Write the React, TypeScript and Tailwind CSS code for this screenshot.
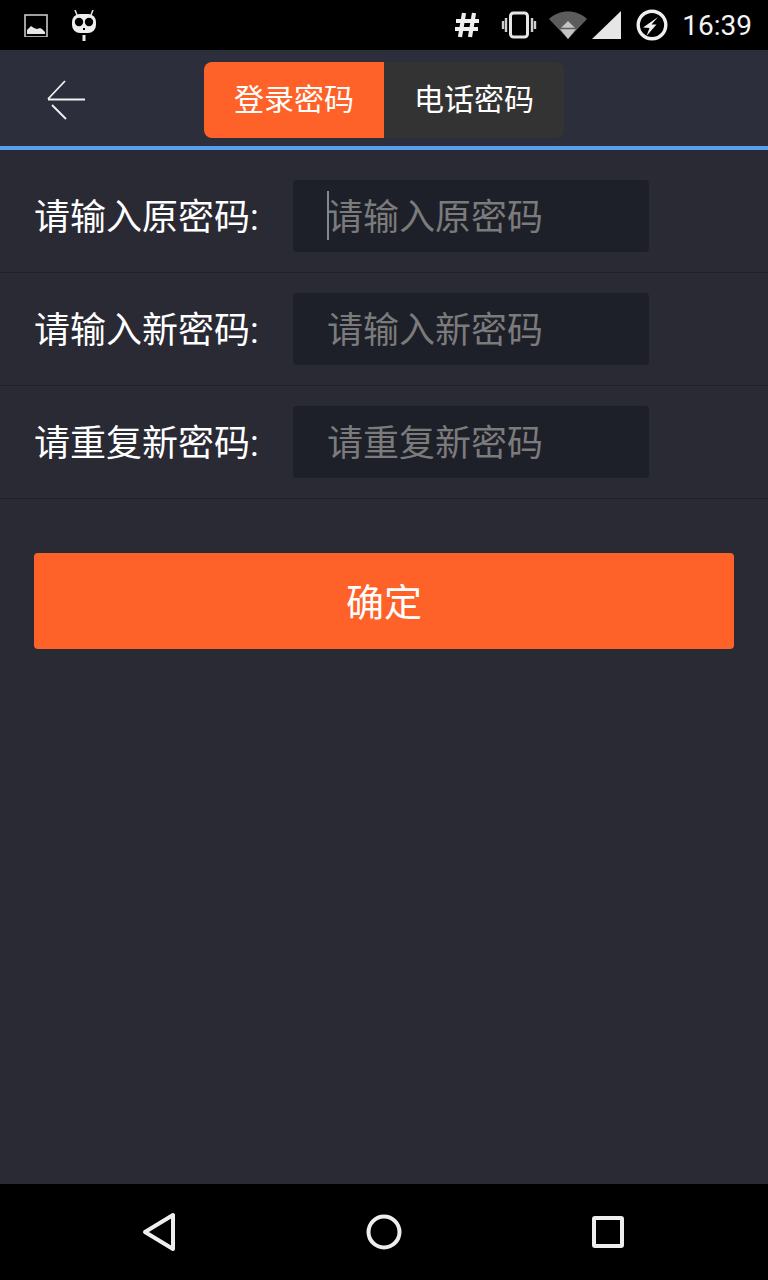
const font = { fontFamily: '"Roboto", "Noto Sans CJK SC", sans-serif' };

function Row({ label, ph, caret, first }: { label: string; ph: string; caret?: boolean; first?: boolean }) {
  return (
    <div className={first ? "flex h-[123px] items-start border-b border-[#1f2028] pl-[34px] pt-[30px] box-border" : "flex h-[113px] items-start border-b border-[#1f2028] pl-[34px] pt-[20px] box-border"}>
      <div className="flex h-[72px] w-[259px] shrink-0 items-center pt-[3px] text-[36px] leading-none text-white">{label}:</div>
      <div className="relative flex h-[72px] w-[356px] items-center rounded-[4px] bg-[#1d1f29] pl-[34px] pt-[4px] text-[36px] leading-none text-[#7b7b7b]">
        {caret && <div className="absolute left-[34px] top-[11px] h-[49px] w-[2px] bg-[#858995]" />}
        {ph}
      </div>
    </div>
  );
}

export default function App() {
  return (
    <div style={font} className="flex h-[1280px] w-[768px] flex-col overflow-hidden bg-[#2a2a35]">
      <div className="flex h-[50px] shrink-0 items-center justify-between bg-black pl-[24px] pr-[16px] text-white">
        <div className="flex items-center gap-[23px]">
          <svg width="24" height="24" viewBox="0 0 24 24">
            <rect x="1" y="2" width="22" height="22" fill="none" stroke="#c8c8c8" strokeWidth="1.6" />
            <path d="M3 21v-4l4-4 3 2 3 1 3-1 2 1 3 3v2z" fill="#e6e6e6" />
          </svg>
          <svg width="26" height="32" viewBox="0 0 26 32">
            <path d="M4 1l2 5M22 1l-2 5" stroke="#e8e8e8" strokeWidth="1.5" />
            <rect x="1" y="5" width="24" height="19" rx="8" fill="#eeeeee" />
            <circle cx="8" cy="13" r="4.2" fill="#000" />
            <circle cx="18" cy="13" r="4.2" fill="#000" />
            <rect x="12" y="19" width="2" height="2" fill="#000" />
            <rect x="11.5" y="26" width="3" height="6" fill="#e8e8e8" />
          </svg>
        </div>
        <div className="flex items-center">
          <svg width="26" height="26" viewBox="0 0 26 26" className="mr-[21px]">
            <path d="M10 1L6 25M20 1l-4 24M2 9h23M1 17h23" stroke="#efefef" strokeWidth="4.2" fill="none" />
          </svg>
          <svg width="36" height="28" viewBox="0 0 36 28" className="mr-[12px]">
            <rect x="9.5" y="2" width="17" height="24" rx="3" fill="none" stroke="#e6e6e6" strokeWidth="3" />
            <path d="M5 7v14M2 10v8M31 7v14M34 10v8" stroke="#cfcfcf" strokeWidth="2.4" />
          </svg>
          <svg width="38" height="28" viewBox="0 0 38 28" className="mr-[5px]">
            <path d="M0 8C10-2 28-2 38 8L19 28z" fill="#5c5c5c" />
            <path d="M19 10l8 8-8 10-8-10z" fill="#c4c4c4" />
            <path d="M11 17.5h16" stroke="#5c5c5c" strokeWidth="1.5" />
          </svg>
          <svg width="29" height="28" viewBox="0 0 29 28" className="mr-[15px]">
            <path d="M29 0v28H0z" fill="#e6e6e6" />
          </svg>
          <svg width="32" height="32" viewBox="0 0 32 32" className="mr-[14px]">
            <circle cx="16" cy="16" r="13.8" fill="none" stroke="#f0f0f0" strokeWidth="3.4" />
            <path d="M22 8L7 18.5l6.5 .5L10.5 27 20.5 15.5h-5z" fill="#f0f0f0" />
          </svg>
          <span className="pt-[1px] text-[28px] leading-none text-[#f4f4f4]">16:39</span>
        </div>
      </div>

      <div className="relative flex h-[100px] shrink-0 items-start justify-center border-b-[4px] border-[#5a9fee] bg-[#2c2f3b] pt-[12px] box-border">
        <svg width="40" height="40" viewBox="0 0 40 40" className="absolute left-[46px] top-[30px]" fill="none" stroke="#f2f2f2" strokeWidth="1.8">
          <path d="M39 19.5H2M19 1L2 19M6 25l14 14" />
        </svg>
        <div className="flex h-[76px] w-[360px] overflow-hidden rounded-[8px] bg-[#333333] text-[30px] leading-none text-white">
          <div className="flex w-[180px] items-center justify-center bg-[#ff6229]">登录密码</div>
          <div className="flex w-[180px] items-center justify-center">电话密码</div>
        </div>
      </div>

      <Row first label="请输入原密码" ph="请输入原密码" caret />
      <Row label="请输入新密码" ph="请输入新密码" />
      <Row label="请重复新密码" ph="请重复新密码" />

      <div className="px-[34px] pt-[54px]">
        <div className="flex h-[96px] items-center justify-center rounded-[4px] bg-[#ff6229] pt-[4px] text-[38px] leading-none text-white">确定</div>
      </div>

      <div className="mt-auto flex h-[96px] shrink-0 items-center bg-black">
        <div className="flex w-full items-center justify-between pl-[141px] pr-[143px]">
          <svg width="36" height="40" viewBox="0 0 36 40" fill="none" stroke="#eeeeee" strokeWidth="4" strokeLinejoin="round">
            <path d="M32 3v34L4 20z" />
          </svg>
          <svg width="36" height="36" viewBox="0 0 36 36" fill="none" stroke="#eeeeee" strokeWidth="4">
            <circle cx="18" cy="18" r="15.5" />
          </svg>
          <svg width="34" height="34" viewBox="0 0 34 34" fill="none" stroke="#eeeeee" strokeWidth="4" strokeLinejoin="round">
            <rect x="3" y="3" width="28" height="28" rx="1" />
          </svg>
        </div>
      </div>
    </div>
  );
}
